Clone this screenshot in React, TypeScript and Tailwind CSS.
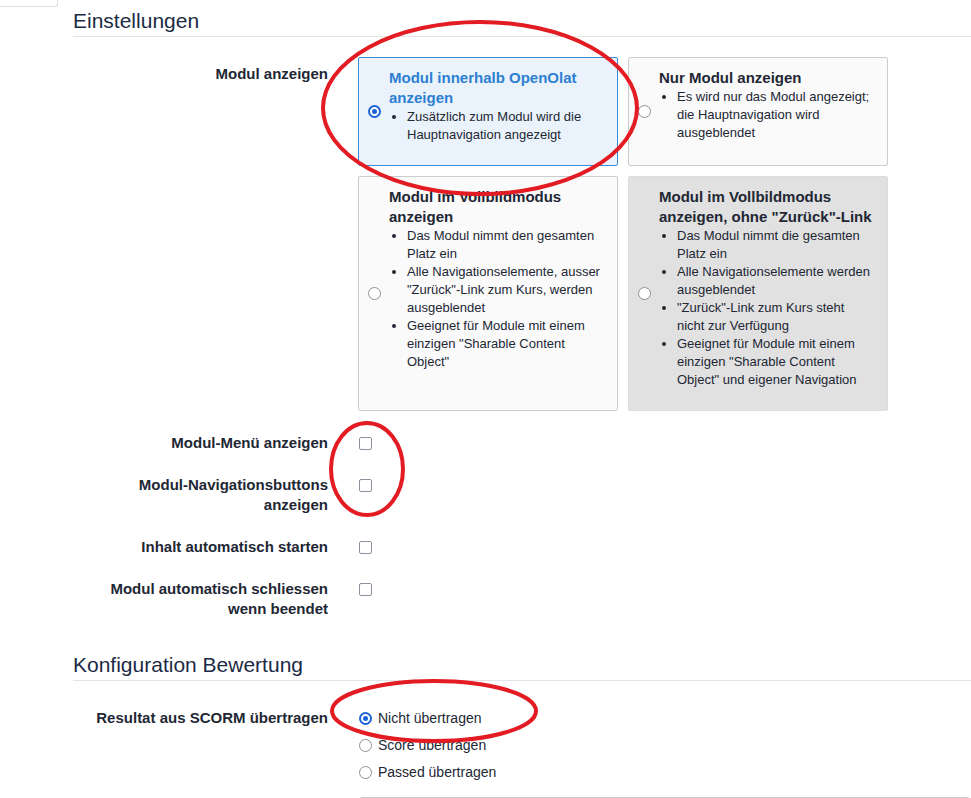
import type { ReactNode } from 'react';

type Variant = 'active' | 'default' | 'muted';

function Radio({ checked }: { checked?: boolean }) {
  return checked ? (
    <span className="w-[13px] h-[13px] shrink-0 rounded-full border-2 border-[#1b63d8] bg-white flex items-center justify-center">
      <span className="w-[5px] h-[5px] rounded-full bg-[#1b63d8]" />
    </span>
  ) : (
    <span className="w-[13px] h-[13px] shrink-0 rounded-full border-[1.5px] border-[#8f8f9d] bg-white" />
  );
}

function Checkbox() {
  return <span className="ml-[1px] w-[13px] h-[13px] shrink-0 rounded-[2px] border-[1.5px] border-[#8f8f9d] bg-white" />;
}

const cardStyles: Record<Variant, string> = {
  active: 'bg-[#eaf3fb] border-[#3b8ad8]',
  default: 'bg-[#fafafa] border-[#cccccc]',
  muted: 'bg-[#e1e1e1] border-[#dddddd]',
};

function OptionCard({ title, items, variant, checked }: { title: string; items: string[]; variant: Variant; checked?: boolean }) {
  return (
    <div className={`flex pl-[9px] border rounded-[2px] ${cardStyles[variant]}`}>
      <div className="self-center flex">
        <Radio checked={checked} />
      </div>
      <div className="flex-1 ml-[8px] pr-[14px] pt-[10px] pb-[21px]">
        <div className={`text-[15px] leading-[20px] font-bold ${variant === 'active' ? 'text-[#2d7fd2]' : 'text-[#222734]'}`}>
          {title}
        </div>
        <ul className="list-disc pl-[18px] text-[13px] leading-[18px] text-[#222734]">
          {items.map((t) => (
            <li key={t}>{t}</li>
          ))}
        </ul>
      </div>
    </div>
  );
}

function FormRow({ label, children }: { label: string; children: ReactNode }) {
  return (
    <div className="flex mb-[15px]">
      <div className="w-[255px] shrink-0 pl-[15px] pt-[7px] text-right text-[15px] leading-[20px] font-bold text-[#222734]">
        {label}
      </div>
      <div className="flex-1 ml-[30px]">{children}</div>
    </div>
  );
}

function CheckRow({ label }: { label: string }) {
  return (
    <FormRow label={label}>
      <div className="pt-[7px] h-[27px] flex items-center">
        <Checkbox />
      </div>
    </FormRow>
  );
}

function Heading({ children, className = '' }: { children: ReactNode; className?: string }) {
  return (
    <h2 className={`text-[21px] leading-[22px] pb-[4px] border-b border-[#e5e5e5] text-[#1c2b45] ${className}`}>{children}</h2>
  );
}

export default function App() {
  return (
    <div className="relative h-[798px] overflow-hidden bg-white font-['Liberation_Sans',Arial,sans-serif]">
      <div className="flex">
        <div className="w-[58px] shrink-0">
          <div className="h-[7px] border-r border-b border-[#dddddd] rounded-br-[3px]" />
        </div>

        <div className="flex-1 ml-[15px]">
          <Heading className="pt-[10px] mb-[20px]">Einstellungen</Heading>

          <FormRow label="Modul anzeigen">
            <div className="grid grid-cols-[260px_260px] gap-[10px]">
              <OptionCard
                variant="active"
                checked
                title="Modul innerhalb OpenOlat anzeigen"
                items={['Zusätzlich zum Modul wird die Hauptnavigation angezeigt']}
              />
              <OptionCard
                variant="default"
                title="Nur Modul anzeigen"
                items={['Es wird nur das Modul angezeigt; die Hauptnavigation wird ausgeblendet']}
              />
              <OptionCard
                variant="default"
                title="Modul im Vollbildmodus anzeigen"
                items={[
                  'Das Modul nimmt den gesamten Platz ein',
                  'Alle Navigationselemente, ausser "Zurück"-Link zum Kurs, werden ausgeblendet',
                  'Geeignet für Module mit einem einzigen "Sharable Content Object"',
                ]}
              />
              <OptionCard
                variant="muted"
                title={'Modul im Vollbildmodus anzeigen, ohne "Zurück"-Link'}
                items={[
                  'Das Modul nimmt die gesamten Platz ein',
                  'Alle Navigationselemente werden ausgeblendet',
                  '"Zurück"-Link zum Kurs steht nicht zur Verfügung',
                  'Geeignet für Module mit einem einzigen "Sharable Content Object" und eigener Navigation',
                ]}
              />
            </div>
          </FormRow>

          <CheckRow label="Modul-Menü anzeigen" />
          <CheckRow label="Modul-Navigationsbuttons anzeigen" />
          <CheckRow label="Inhalt automatisch starten" />
          <CheckRow label="Modul automatisch schliessen wenn beendet" />

          <Heading className="mt-[35px] mb-[20px]">Konfiguration Bewertung</Heading>

          <FormRow label="Resultat aus SCORM übertragen">
            <div className="pt-[7px] flex flex-col gap-[7px] text-[14px] leading-[20px] text-[#222734]">
              {['Nicht übertragen', 'Score übertragen', 'Passed übertragen'].map((t, i) => (
                <label key={t} className="h-[20px] flex items-center gap-[6px] ml-[1px]">
                  <Radio checked={i === 0} />
                  <span>{t}</span>
                </label>
              ))}
            </div>
          </FormRow>

          <FormRow label="">
            <div className="h-[40px] border border-[#cccccc] rounded-[4px]" />
          </FormRow>
        </div>
      </div>

      {/* red annotation marks drawn over the screenshot */}
      <svg className="absolute inset-0 pointer-events-none" width="971" height="798" viewBox="0 0 971 798">
        <g fill="none" stroke="#e31b23" strokeWidth="4">
          <ellipse cx="480" cy="108" rx="157" ry="86" />
          <ellipse cx="367" cy="469" rx="36" ry="46" />
          <ellipse cx="434" cy="711" rx="102" ry="30" />
        </g>
      </svg>
    </div>
  );
}
